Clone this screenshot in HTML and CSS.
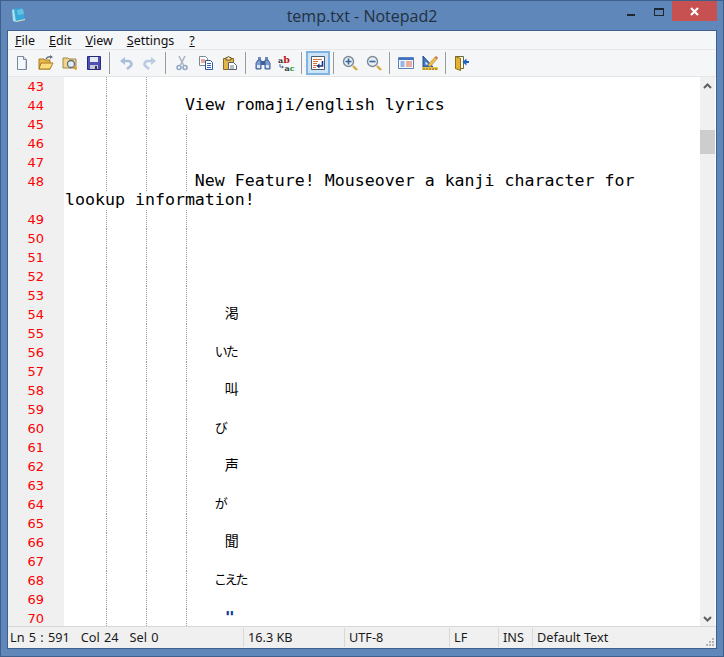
FILE: index.html
```html
<!DOCTYPE html>
<html>
<head>
  <meta charset="utf-8">
  <title>temp.txt - Notepad2</title>
  <link rel="stylesheet" href="styles.css">
</head>
<body>
  <div class="window">
    <header class="titlebar">
      <svg class="app-icon" width="14" height="15" viewBox="0 0 14 15"><path d="M3 1l8-1 3 11-9 3-3-1z" fill="#37a9d8"/><path d="M2 13L1 2l2-1 2 13z" fill="#a8e0ee"/><path d="M5 13l9-2v1l-9 2z" fill="#e9e4c4"/><path d="M6 2l6-1 1 5-6 1z" fill="#62c3e6"/></svg>
      <div class="title">temp.txt - Notepad2</div>
      <div class="controls">
        <div class="ctl"><span class="min-glyph"></span></div>
        <div class="ctl"><span class="max-glyph"></span></div>
        <div class="ctl close"><svg width="9" height="9" viewBox="0 0 9 9"><path d="M1 1l7 7M8 1L1 8" stroke="#fff" stroke-width="2.2"/></svg></div>
      </div>
    </header>

    <div class="client">
      <nav class="menu">
        <span class="menu-item"><u>F</u>ile</span>
        <span class="menu-item"><u>E</u>dit</span>
        <span class="menu-item"><u>V</u>iew</span>
        <span class="menu-item"><u>S</u>ettings</span>
        <span class="menu-item menu-help"><u>?</u></span>
      </nav>

      <div class="toolbar">
        <!-- new -->
        <span class="tool"><svg viewBox="0 0 16 16"><path d="M3.5 1.5h6l3 3v10h-9z" fill="#f4f7fb" stroke="#7a8798"/><path d="M9.5 1.5v3h3" fill="#dfe6ef" stroke="#7a8798"/><path d="M11.5 6v8" stroke="#c3cfde"/></svg></span>
        <!-- open -->
        <span class="tool"><svg viewBox="0 0 16 16"><path d="M1 4h5l1 1h5v9H1z" fill="#e6b94f" stroke="#a87a1e"/><path d="M1 14l2-6h12l-3 6z" fill="#fbdc7e" stroke="#a87a1e"/><path d="M8 4c1-2 3-2.500 5-2" fill="none" stroke="#64707e" stroke-width="1.500"/><path d="M12 0l3 2-3 2z" fill="#64707e"/></svg></span>
        <!-- open with search -->
        <span class="tool"><svg viewBox="0 0 16 16"><path d="M1 3h5l1 1h7v9H1z" fill="#f1d48b" stroke="#a48843"/><circle cx="9" cy="9" r="3.500" fill="#e4edf6" stroke="#5f6e7e" stroke-width="1.300"/><path d="M11.500 11.500l3 3" stroke="#d99a2b" stroke-width="2"/></svg></span>
        <!-- save -->
        <span class="tool"><svg viewBox="0 0 16 16"><path d="M1.500 1.500h13v13h-13z" fill="#4d4fb5" stroke="#2a2b78"/><path d="M4 2h8v5H4z" fill="#e6eaf5"/><path d="M4 10h8v4H4z" fill="#c5c8d4"/><path d="M9 11h2v3H9z" fill="#33355f"/></svg></span>
        <span class="sep"></span>
        <!-- undo -->
        <span class="tool"><svg viewBox="0 0 16 16"><path d="M4 6h6a3 3 0 0 1 2 5.500L9 14" fill="none" stroke="#a9bedb" stroke-width="2.600"/><path d="M2 6l5-4v8z" fill="#a9bedb"/></svg></span>
        <!-- redo -->
        <span class="tool"><svg viewBox="0 0 16 16"><path d="M12 6H6a3 3 0 0 0-2 5.500L7 14" fill="none" stroke="#b9cbe2" stroke-width="2.600"/><path d="M14 6L9 2v8z" fill="#b9cbe2"/></svg></span>
        <span class="sep"></span>
        <!-- cut -->
        <span class="tool"><svg viewBox="0 0 16 16"><path d="M5 1l4.500 9M11 1L6.500 10" stroke="#aab2bd" stroke-width="1.500"/><circle cx="5" cy="12.500" r="2" fill="none" stroke="#8ea6c8" stroke-width="1.500"/><circle cx="11" cy="12.500" r="2" fill="none" stroke="#8ea6c8" stroke-width="1.500"/></svg></span>
        <!-- copy -->
        <span class="tool"><svg viewBox="0 0 16 16"><path d="M1.500 1.500h6l2 2v7h-8z" fill="#fff" stroke="#7a8798"/><path d="M3 5h4M3 7h4" stroke="#d2552e"/><path d="M7.500 5.500h5l2 2v7h-7z" fill="#fff" stroke="#31569c"/><path d="M9 8.500h4M9 10.500h4M9 12.500h4" stroke="#2d62c0"/></svg></span>
        <!-- paste -->
        <span class="tool"><svg viewBox="0 0 16 16"><path d="M1.500 3.500h10v11h-10z" fill="#e2b54a" stroke="#8a6a20"/><path d="M4 2.500h1.500a1 1 0 0 1 2 0H9v2.500H4z" fill="#f3e6b3" stroke="#6d5a2c"/><path d="M6.500 7.500h5l3 3v4h-8z" fill="#fff" stroke="#555e6c"/><path d="M8 11h4M8 13h4" stroke="#717a88"/></svg></span>
        <span class="sep"></span>
        <!-- find -->
        <span class="tool tool-find"><svg viewBox="0 0 16 16"><path d="M3 2h3v3H3zM10 2h3v3h-3z" fill="#6f8fc4"/><path d="M1 14V8l2-3h3v9zM15 14V8l-2-3h-3v9z" fill="#7f9fd2" stroke="#3f5f98"/><path d="M6 6h4v4H6z" fill="#3f5f98"/><path d="M2 10h3v3H2zM11 10h3v3h-3z" fill="#dbe7f6"/></svg></span>
        <!-- replace -->
        <span class="tool tool-replace"><svg viewBox="0 0 18 16"><text class="rep-ab" x="0" y="8">a<tspan class="rep-b" fill="#c01818">b</tspan></text><text class="rep-ac" x="6.500" y="15.500">a<tspan fill="#2d9a2d">c</tspan></text><path d="M2 9v3h3" fill="none" stroke="#4a6fa8"/><path d="M4 10.500l2 1.500-2 1.500z" fill="#4a6fa8"/></svg></span>
        <span class="sep"></span>
        <!-- word wrap, switched on -->
        <span class="tool active"><svg viewBox="0 0 16 16"><path d="M1.500 1.500h13v13h-13z" fill="#fff" stroke="#505a68"/><path d="M3 4.500h9M3 6.500h5M3 8.500h4M3 10.500h5M3 12.500h3" stroke="#e0703a"/><path d="M12.500 6v5H8" fill="none" stroke="#14318c" stroke-width="1.600"/><path d="M9.500 8.500v5L6.500 11z" fill="#14318c"/></svg></span>
        <span class="sep"></span>
        <!-- zoom in -->
        <span class="tool"><svg viewBox="0 0 16 16"><circle cx="6.500" cy="6.500" r="5" fill="#e6edf4" stroke="#7f8a96" stroke-width="1.400"/><path d="M11 11l4 4" stroke="#d8a83c" stroke-width="2.400"/><path d="M3.500 6.500h6M6.500 3.500v6" stroke="#33669c" stroke-width="1.600"/></svg></span>
        <!-- zoom out -->
        <span class="tool"><svg viewBox="0 0 16 16"><circle cx="6.500" cy="6.500" r="5" fill="#e6edf4" stroke="#7f8a96" stroke-width="1.400"/><path d="M11 11l4 4" stroke="#d8a83c" stroke-width="2.400"/><path d="M3.500 6.500h6" stroke="#33669c" stroke-width="1.600"/></svg></span>
        <span class="sep"></span>
        <!-- scheme -->
        <span class="tool"><svg viewBox="0 0 16 16"><path d="M.5 2.500h15v11H.5z" fill="#f2f5fa" stroke="#5d7fb8"/><path d="M1 3h14v2H1z" fill="#3f74c4"/><path d="M2.500 7h4M2.500 9h4M2.500 11h4" stroke="#3f74c4"/><path d="M8 7h6M8 9h6M8 11h6" stroke="#e0693a"/></svg></span>
        <!-- customize -->
        <span class="tool"><svg viewBox="0 0 16 16"><path d="M1 1v11l10-0z" fill="#3f78c8" stroke="#234c90"/><path d="M3.500 6.500v3h3z" fill="#f2f5fa"/><path d="M6 10l7-8 2 2-7 8z" fill="#efc04f" stroke="#b0782a" stroke-width=".6"/><path d="M13 2l1-1 2 2-1 1z" fill="#d2583c"/><path d="M0 12h16v3H0z" fill="#e9c44d"/><path d="M2 13v2M5 13v2M8 13v2M11 13v2M14 13v2" stroke="#7b6220"/></svg></span>
        <span class="sep"></span>
        <!-- exit -->
        <span class="tool"><svg viewBox="0 0 16 16"><path d="M1.500 1.500h8v12h-8z" fill="#fbfbf1" stroke="#6e6a2c"/><path d="M1.500 1.500l5 2v12l-5-2z" fill="#e4b332" stroke="#8c6f1a"/><path d="M9 7h6" stroke="#1c62c8" stroke-width="2"/><path d="M12.500 3.500v7L8.500 7z" fill="#1c62c8"/></svg></span>
      </div>

      <div class="editor">
        <div class="lines">
          <div class="row"><span class="num">43</span><span class="code g2"></span></div>
          <div class="row"><span class="num">44</span><span class="code g2">            View romaji/english lyrics</span></div>
          <div class="row"><span class="num">45</span><span class="code g3"></span></div>
          <div class="row"><span class="num">46</span><span class="code g3"></span></div>
          <div class="row"><span class="num">47</span><span class="code g3"></span></div>
          <div class="row"><span class="num">48</span><span class="code g3">             New Feature! Mouseover a kanji character for</span></div>
          <div class="row"><span class="num"></span><span class="code">lookup information!</span></div>
          <div class="row"><span class="num">49</span><span class="code g3"></span></div>
          <div class="row"><span class="num">50</span><span class="code g3"></span></div>
          <div class="row"><span class="num">51</span><span class="code g3"></span></div>
          <div class="row"><span class="num">52</span><span class="code g3"></span></div>
          <div class="row"><span class="num">53</span><span class="code g3"></span></div>
          <div class="row"><span class="num">54</span><span class="code g3">                <span class="kanji">渇</span></span></div>
          <div class="row"><span class="num">55</span><span class="code g3"></span></div>
          <div class="row"><span class="num">56</span><span class="code g3">               <span class="kana">いた</span></span></div>
          <div class="row"><span class="num">57</span><span class="code g3"></span></div>
          <div class="row"><span class="num">58</span><span class="code g3">                <span class="kanji">叫</span></span></div>
          <div class="row"><span class="num">59</span><span class="code g3"></span></div>
          <div class="row"><span class="num">60</span><span class="code g3">               <span class="kana">び</span></span></div>
          <div class="row"><span class="num">61</span><span class="code g3"></span></div>
          <div class="row"><span class="num">62</span><span class="code g3">                <span class="kanji">声</span></span></div>
          <div class="row"><span class="num">63</span><span class="code g3"></span></div>
          <div class="row"><span class="num">64</span><span class="code g3">               <span class="kana">が</span></span></div>
          <div class="row"><span class="num">65</span><span class="code g3"></span></div>
          <div class="row"><span class="num">66</span><span class="code g3">                <span class="kanji">聞</span></span></div>
          <div class="row"><span class="num">67</span><span class="code g3"></span></div>
          <div class="row"><span class="num">68</span><span class="code g3">               <span class="kana">こえた</span></span></div>
          <div class="row"><span class="num">69</span><span class="code g3"></span></div>
          <div class="row"><span class="num">70</span><span class="code g3">                <span class="quote">"</span></span></div>
        </div>
        <div class="scrollbar">
          <svg class="arrow" width="15" height="17" viewBox="0 0 15 17"><path d="M4 11l3.500-3.500L11 11" fill="none" stroke="#606060" stroke-width="2"/></svg>
          <div class="thumb"></div>
          <svg class="arrow arrow-down" width="15" height="17" viewBox="0 0 15 17"><path d="M4 8l3.500 3.500L11 8" fill="none" stroke="#606060" stroke-width="2"/></svg>
        </div>
      </div>

      <footer class="status">
        <div class="cell cell-pos"><span>Ln 5 : 591</span><span>Col 24</span><span>Sel 0</span></div>
        <div class="cell cell-size">16.3 KB</div>
        <div class="cell cell-enc">UTF-8</div>
        <div class="cell cell-eol">LF</div>
        <div class="cell cell-ins">INS</div>
        <div class="cell cell-lex">Default Text</div>
        <svg class="grip" width="9" height="9" viewBox="0 0 9 9"><path d="M6 0h2v2H6zM3 3h2v2H3zM6 3h2v2H6zM0 6h2v2H0zM3 6h2v2H3zM6 6h2v2H6z" fill="#b4b4b4"/></svg>
      </footer>
    </div>
  </div>
</body>
</html>
```

FILE: styles.css
```css
html, body {
  margin: 0;
  padding: 0;
}

body {
  font-family: "Noto Sans", sans-serif;
  font-size: 12.500px;
  color: #1a1a1a;
}

.window {
  box-sizing: border-box;
  width: 724px;
  height: 657px;
  border: 1px solid #3f5f8c;
  padding: 0 6px 7px;
  background-color: #5f87b9;
  display: flex;
  flex-direction: column;
}

/* title bar */
.titlebar {
  height: 29px;
  flex: none;
  display: grid;
  grid-template-columns: 1fr auto 1fr;
}

.app-icon {
  margin: 7px 0 0 4px;
}

.title {
  font-family: "Open Sans", sans-serif;
  font-size: 16px;
  line-height: 31px;
  color: #22303f;
}

.controls {
  display: flex;
  justify-content: flex-end;
  align-items: flex-start;
}

.ctl {
  width: 27px;
  height: 20px;
  display: flex;
  align-items: center;
  justify-content: center;
}

.close {
  width: 45px;
  background-color: #c75050;
}

.min-glyph {
  width: 8px;
  height: 2px;
  margin-top: 8px;
  margin-right: 1px;
  background-color: #1e2630;
}

.max-glyph {
  box-sizing: border-box;
  width: 10px;
  height: 8px;
  margin-top: 2px;
  border: 1px solid #1e2630;
  border-top-width: 2px;
}

/* client area */
.client {
  flex: 1;
  min-height: 0;
  display: flex;
  flex-direction: column;
  border: 1px solid #3f5f8c;
  background-color: #f5f6f8;
}

.menu {
  box-sizing: border-box;
  height: 19px;
  flex: none;
  border-bottom: 1px solid #e8e8ea;
  display: flex;
  line-height: 19px;
}

.menu-item {
  padding: 0 7px;
  color: #111;
}

.menu-help {
  margin-left: 1px;
}

.toolbar {
  box-sizing: border-box;
  height: 27px;
  flex: none;
  padding-left: 2px;
  border-bottom: 1px solid #e6e6e6;
  display: flex;
  align-items: center;
}

.tool {
  box-sizing: border-box;
  width: 24px;
  height: 24px;
  display: flex;
  align-items: center;
  justify-content: center;
}

.tool svg {
  width: 16px;
  height: 16px;
}

.tool-find {
  padding-left: 2px;
}

.tool-replace svg {
  width: 18px;
  margin-left: 2px;
}

.rep-ab, .rep-ac {
  font-family: "DejaVu Serif", serif;
  font-size: 8px;
  font-weight: bold;
  fill: #303840;
}

.rep-b {
  font-size: 9.500px;
}

.active {
  background-color: #cce4f7;
  border: 2px solid #7fb4e2;
}

.sep {
  width: 8px;
  height: 24px;
  flex: none;
}

.sep::before {
  content: "";
  display: block;
  width: 1px;
  height: 22px;
  margin: 1px 0 0 3px;
  background-color: #9a9a9a;
}

/* editor */
.editor {
  flex: 1;
  min-height: 0;
  display: flex;
  overflow: hidden;
  background-color: #fff;
}

.lines {
  flex: 1;
  min-width: 0;
}

.row {
  display: flex;
  height: 19px;
}

.num {
  box-sizing: border-box;
  width: 56px;
  flex: none;
  padding-right: 20px;
  text-align: right;
  background-color: #f0f0f0;
  color: #ff0000;
  font-family: "DejaVu Sans", sans-serif;
  font-size: 13px;
  line-height: 19px;
}

.code {
  flex: 1;
  padding-left: 1px;
  white-space: pre;
  color: #000;
  font-family: "DejaVu Sans Mono", monospace;
  font-size: 16.600px;
  line-height: 17px;
  background-repeat: repeat-y;
  background-size: 1px 2px;
}

.g2 {
  background-image: linear-gradient(#999 50%, transparent 50%), linear-gradient(#999 50%, transparent 50%);
  background-position: 42px 0, 82px 0;
}

.g3 {
  background-image: linear-gradient(#999 50%, transparent 50%), linear-gradient(#999 50%, transparent 50%), linear-gradient(#999 50%, transparent 50%);
  background-position: 42px 0, 82px 0, 122px 0;
}

.kanji, .kana {
  font-family: "Noto Sans CJK JP", sans-serif;
  line-height: 1;
  vertical-align: 1px;
}

.kanji {
  font-size: 14px;
}

.kana {
  font-size: 13px;
  font-feature-settings: "palt";
  letter-spacing: -1px;
}

.quote {
  color: #0a3a9a;
  font-weight: bold;
}

.scrollbar {
  width: 15px;
  flex: none;
  margin-right: 1px;
  background-color: #f0f0f0;
  display: flex;
  flex-direction: column;
}

.arrow {
  display: block;
  flex: none;
}

.thumb {
  height: 24px;
  flex: none;
  margin-top: 36px;
  background-color: #cdcdcd;
}

.arrow-down {
  margin-top: auto;
}

/* status bar */
.status {
  box-sizing: border-box;
  height: 22px;
  flex: none;
  border-top: 1px solid #d8d8d8;
  background-color: #f0f0f0;
  display: flex;
  align-items: stretch;
  font-size: 12.700px;
  color: #1a1a1a;
}

.cell {
  box-sizing: border-box;
  padding-left: 4px;
  margin: 1px 0;
  line-height: 19px;
  border-left: 1px solid #d8d8d8;
  white-space: nowrap;
}

.cell-pos {
  width: 235px;
  padding-left: 2px;
  border-left: 0;
  display: flex;
  gap: 11px;
  word-spacing: 1px;
}

.cell-size { width: 101px; }
.cell-enc { width: 105px; }
.cell-eol { width: 49px; }
.cell-ins { width: 34px; }
.cell-lex { flex: 1; }

.grip {
  align-self: flex-end;
  margin: 0 1px 1px 0;
}
```
